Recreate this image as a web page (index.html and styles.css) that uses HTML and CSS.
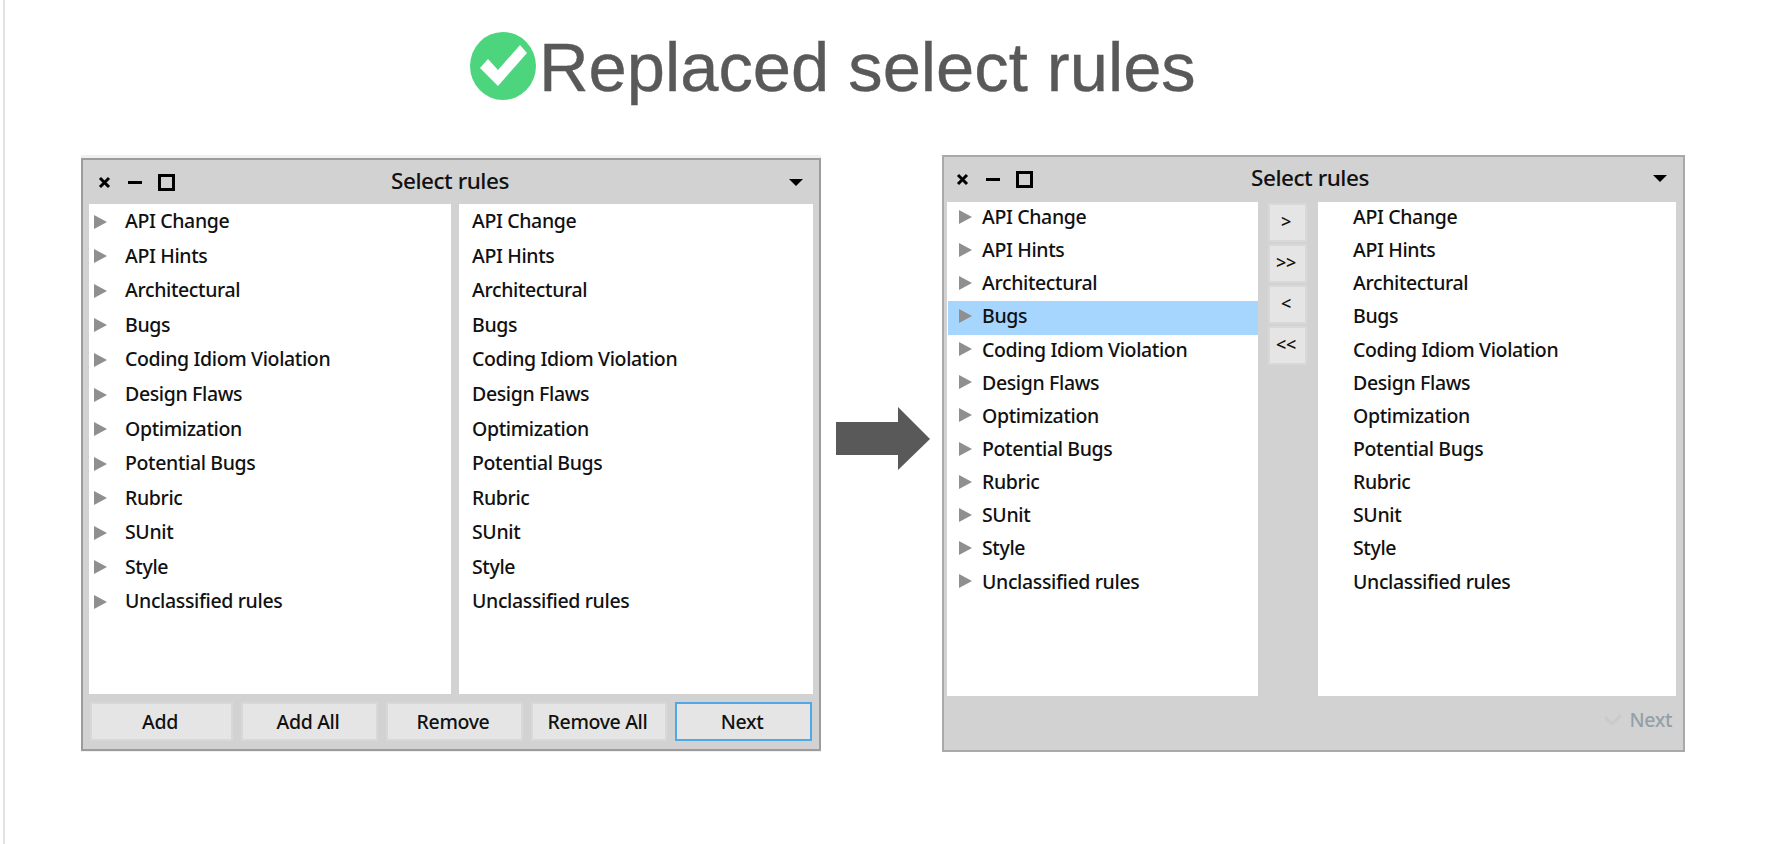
FILE: index.html
```html
<!DOCTYPE html>
<html lang="en">
<head>
<meta charset="utf-8">
<title>Replaced select rules</title>
<link rel="stylesheet" href="styles.css">
</head>
<body>
<main class="slide">
  <h1 class="heading">
    <svg class="check" viewBox="0 0 66 68"><ellipse cx="33" cy="34" rx="33" ry="34" fill="#4cd57d"/><path d="M10 36 L18 27 L28 38 L50 13 L57 21 L28 54 Z" fill="#fff"/></svg>
    <span class="heading-text">Replaced select rules</span>
  </h1>
  <div class="stage">
    <section class="win win-a">
      <header class="titlebar">
        <svg class="ic-x" viewBox="0 0 13 13"><path d="M2 2 L11 11 M11 2 L2 11" stroke="#000" stroke-width="3"/></svg>
        <span class="ic-min"></span>
        <span class="ic-max"></span>
        <span class="title">Select rules</span>
        <span class="ic-menu"></span>
      </header>
      <div class="panes">
        <ul class="list list-a1">
          <li class="row"><i class="tri"></i>API Change</li>
          <li class="row"><i class="tri"></i>API Hints</li>
          <li class="row"><i class="tri"></i>Architectural</li>
          <li class="row"><i class="tri"></i>Bugs</li>
          <li class="row"><i class="tri"></i>Coding Idiom Violation</li>
          <li class="row"><i class="tri"></i>Design Flaws</li>
          <li class="row"><i class="tri"></i>Optimization</li>
          <li class="row"><i class="tri"></i>Potential Bugs</li>
          <li class="row"><i class="tri"></i>Rubric</li>
          <li class="row"><i class="tri"></i>SUnit</li>
          <li class="row"><i class="tri"></i>Style</li>
          <li class="row"><i class="tri"></i>Unclassified rules</li>
        </ul>
        <ul class="list list-a2">
          <li class="row">API Change</li>
          <li class="row">API Hints</li>
          <li class="row">Architectural</li>
          <li class="row">Bugs</li>
          <li class="row">Coding Idiom Violation</li>
          <li class="row">Design Flaws</li>
          <li class="row">Optimization</li>
          <li class="row">Potential Bugs</li>
          <li class="row">Rubric</li>
          <li class="row">SUnit</li>
          <li class="row">Style</li>
          <li class="row">Unclassified rules</li>
        </ul>
      </div>
      <footer class="actions">
        <button class="btn w143">Add</button>
        <button class="btn w137">Add All</button>
        <button class="btn w137">Remove</button>
        <button class="btn w136">Remove All</button>
        <button class="btn w137 focus">Next</button>
      </footer>
    </section>

    <svg class="arrow" viewBox="0 0 94 63"><path d="M0 15 H62 V0 L94 32 L62 63 V48 H0 Z" fill="#595959"/></svg>

    <section class="win win-b">
      <header class="titlebar">
        <svg class="ic-x" viewBox="0 0 13 13"><path d="M2 2 L11 11 M11 2 L2 11" stroke="#000" stroke-width="3"/></svg>
        <span class="ic-min"></span>
        <span class="ic-max"></span>
        <span class="title">Select rules</span>
        <span class="ic-menu"></span>
      </header>
      <div class="panes">
        <ul class="list list-b1">
          <li class="row"><i class="tri"></i>API Change</li>
          <li class="row"><i class="tri"></i>API Hints</li>
          <li class="row"><i class="tri"></i>Architectural</li>
          <li class="row selected"><i class="tri"></i>Bugs</li>
          <li class="row"><i class="tri"></i>Coding Idiom Violation</li>
          <li class="row"><i class="tri"></i>Design Flaws</li>
          <li class="row"><i class="tri"></i>Optimization</li>
          <li class="row"><i class="tri"></i>Potential Bugs</li>
          <li class="row"><i class="tri"></i>Rubric</li>
          <li class="row"><i class="tri"></i>SUnit</li>
          <li class="row"><i class="tri"></i>Style</li>
          <li class="row"><i class="tri"></i>Unclassified rules</li>
        </ul>
        <div class="movers">
          <button class="btn mover">&gt;</button>
          <button class="btn mover">&gt;&gt;</button>
          <button class="btn mover">&lt;</button>
          <button class="btn mover">&lt;&lt;</button>
        </div>
        <ul class="list list-b2">
          <li class="row">API Change</li>
          <li class="row">API Hints</li>
          <li class="row">Architectural</li>
          <li class="row">Bugs</li>
          <li class="row">Coding Idiom Violation</li>
          <li class="row">Design Flaws</li>
          <li class="row">Optimization</li>
          <li class="row">Potential Bugs</li>
          <li class="row">Rubric</li>
          <li class="row">SUnit</li>
          <li class="row">Style</li>
          <li class="row">Unclassified rules</li>
        </ul>
      </div>
      <footer class="next-bar">
        <svg class="next-check" viewBox="0 0 18 12"><path d="M1 4 L8 11 L17 2" fill="none" stroke="#cacaca" stroke-width="3"/></svg>
        <span class="next-label">Next</span>
      </footer>
    </section>
  </div>
</main>
</body>
</html>
```
FILE: styles.css
```css
* { box-sizing: border-box; }
html, body { margin: 0; padding: 0; background: #fff; }
body { height: 844px; overflow: hidden; }
.slide {
  margin-left: 3px;
  height: 844px;
  border-left: 2px solid #e2e2e2;
}
.heading {
  margin: 0;
  padding: 32px 0 0 465px;
  height: 155px;
  display: flex;
  align-items: flex-start;
  gap: 3px;
  font: 400 68.7px/68px "Liberation Sans", Arial, sans-serif;
  -webkit-text-stroke: 0.4px #595959;
  color: #595959;
}
.heading-text { margin-top: 2px; }
.check { width: 66px; height: 68px; flex: none; }
.stage { display: flex; align-items: flex-start; }
.win {
  background: #d2d2d2;
  border: 2px solid #a9a9a9;
  font: 500 19.5px "Noto Sans", sans-serif;
  color: #111;
  display: flex;
  flex-direction: column;
}
.win-a {
  width: 740px;
  height: 593px;
  margin: 3px 0 0 76px;
  box-shadow: 0 -3px 0 #f0f0f0, 0 1px 0 #f0f0f0;
  border-color: #9c9c9c;
}
.win-b { width: 743px; height: 597px; }
.titlebar { display: flex; align-items: center; flex: none; position: relative; }
.win-a .titlebar { height: 44px; padding-left: 15px; }
.win-b .titlebar { height: 45px; padding-left: 12px; }
.ic-x { width: 13px; height: 13px; flex: none; }
.ic-min { width: 14px; height: 3px; background: #000; margin-left: 17px; flex: none; }
.ic-max { width: 17px; height: 17px; border: 3px solid #000; margin-left: 16px; flex: none; }
.title { position: absolute; font-size: 22.5px; letter-spacing: -0.45px; margin-top: -4px; }
.win-a .title { left: 308px; }
.win-b .title { left: 307px; }
.ic-menu {
  position: absolute;
  width: 0; height: 0;
  border-left: 7px solid transparent;
  border-right: 7px solid transparent;
  border-top: 7px solid #000;
}
.win-a .ic-menu { left: 706px; top: 19px; }
.win-b .ic-menu { left: 709px; top: 18px; }
.panes { display: flex; align-items: stretch; flex: none; }
.win-a .panes { height: 490px; padding-left: 6px; gap: 8px; }
.win-b .panes { height: 494px; padding-left: 3px; }
.list { list-style: none; margin: 0; padding: 0; background: #fff; }
.list-a1 { width: 362px; }
.list-a2 { width: 354px; }
.list-b1 { width: 311px; padding: 0 0 0 1px; }
.list-b2 { width: 358px; }
.movers { width: 60px; padding: 1px 0 0 10px; display: flex; flex-direction: column; gap: 2px; }
.row { display: flex; align-items: center; white-space: nowrap; letter-spacing: -0.36px; }
.win-a .row { height: 34.55px; padding-bottom: 1px; }
.win-b .row { height: 33.15px; padding-bottom: 4px; }
.list-a1 .row { padding-left: 5px; }
.list-a2 .row { padding-left: 13px; }
.list-b1 .row { padding-left: 11px; }
.list-b2 .row { padding-left: 35px; }
.selected { background: #a6d5fd; }
.tri {
  width: 0; height: 0; flex: none;
  border-top: 7px solid transparent;
  border-bottom: 7px solid transparent;
  border-left: 13px solid #8f8f8f;
  margin-right: 18px;
}
.win-a .tri { margin-top: 2px; }
.list-b1 .tri { margin-right: 10px; }
.btn {
  background: #e5e5e5;
  border: 2px solid #d8d8d8;
  border-radius: 0;
  padding: 0 3px 0 0;
  font: inherit;
  color: #111;
  letter-spacing: -0.36px;
}
.actions { display: flex; gap: 8px; padding: 8px 0 0 7px; flex: none; }
.actions .btn { height: 39px; }
.w143 { width: 143px; }
.w137 { width: 137px; }
.w136 { width: 136px; }
.focus { border-color: #4fa9e6; }
.mover { width: 39px; height: 39px; font-size: 18px; padding-bottom: 3px; }
.arrow { width: 94px; height: 63px; flex: none; margin: 252px 12px 0 15px; }
.next-bar { display: flex; align-items: center; justify-content: flex-end; gap: 7px; height: 50px; padding: 0 11px 4px 0; }
.next-check { width: 18px; height: 12px; }
.next-label { color: #93a0a8; letter-spacing: -0.36px; }
```
